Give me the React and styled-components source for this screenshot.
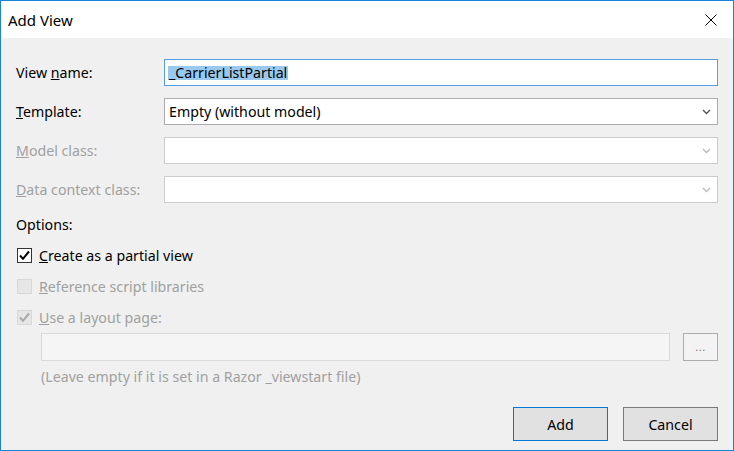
import React from "react";
import styled, { createGlobalStyle, css } from "styled-components";

const GlobalStyle = createGlobalStyle`
  html, body {
    margin: 0;
    padding: 0;
    background: #ffffff;
  }
  body {
    font-family: "Noto Sans", "Open Sans", sans-serif;
    font-size: 14px;
  }
`;

const Window = styled.div`
  width: 734px;
  height: 451px;
  box-sizing: border-box;
  border: 1px solid #1883d7;
  display: flex;
  flex-direction: column;
  background: #f0f0f0;
  color: #000;
`;

const TitleBar = styled.div`
  height: 37px;
  background: #ffffff;
  display: flex;
  align-items: center;
  justify-content: space-between;
  padding: 0 10px 0 7px;
  font-size: 15px;
`;

const CloseButton = styled.button`
  border: none;
  background: none;
  padding: 0;
  width: 24px;
  height: 24px;
  display: flex;
  align-items: center;
  justify-content: center;
`;

const Body = styled.div`
  flex: 1;
  display: flex;
  flex-direction: column;
  padding: 21px 15px 0 15px;
  font-size: 14.2px;
`;

const FieldGrid = styled.div`
  display: grid;
  grid-template-columns: 148px 1fr;
  row-gap: 12px;
  align-items: center;
`;

const Label = styled.label`
  color: ${({ disabled }) => (disabled ? "#a0a0a0" : "#000")};
`;

const TextBox = styled.div`
  height: 27px;
  box-sizing: border-box;
  background: #fff;
  border: 1px solid #569de5;
  display: flex;
  align-items: center;
  padding-left: 3px;
`;

const Selected = styled.span`
  background: #99c9ef;
  line-height: 14px;
  padding: 0 1px;
`;

const Select = styled.div`
  height: 27px;
  box-sizing: border-box;
  background: #fff;
  border: 1px solid ${({ disabled }) => (disabled ? "#cccccc" : "#acacac")};
  display: flex;
  align-items: center;
  justify-content: space-between;
  padding: 0 6px 0 4px;
`;

const OptionsTitle = styled.div`
  margin-top: 12px;
`;

const CheckRow = styled.div`
  display: flex;
  align-items: center;
  gap: 7px;
  height: 20px;
  margin-top: 11px;
  padding-left: 1px;
  color: ${({ disabled }) => (disabled ? "#a0a0a0" : "#000")};
`;

const Box = styled.span`
  width: 15px;
  height: 15px;
  box-sizing: border-box;
  display: flex;
  align-items: center;
  justify-content: center;
  ${({ disabled }) =>
    disabled
      ? css`
          border: 1px solid #d8d8d8;
          background: #e6e6e6;
        `
      : css`
          border: 1px solid #333;
          background: #fff;
        `}
`;

const LayoutRow = styled.div`
  display: flex;
  gap: 13px;
  margin-top: 6px;
  padding-left: 25px;
`;

const LayoutInput = styled.div`
  flex: 1;
  height: 28px;
  box-sizing: border-box;
  background: #f5f5f5;
  border: 1px solid #dadada;
`;

const Browse = styled.button`
  width: 35px;
  height: 28px;
  box-sizing: border-box;
  border: 1px solid #adadad;
  background: #f3f3f3;
  color: #777;
  font-family: inherit;
  font-size: 11px;
  padding: 0;
  line-height: 20px;
  letter-spacing: 0.5px;
`;

const Hint = styled.div`
  padding-left: 25px;
  margin-top: 6px;
  color: #a0a0a0;
`;

const Footer = styled.div`
  display: flex;
  justify-content: flex-end;
  gap: 15px;
  margin-top: auto;
  margin-bottom: 9px;
`;

const Button = styled.button`
  width: 95px;
  height: 34px;
  box-sizing: border-box;
  background: #e1e1e1;
  border: 1px solid ${({ primary }) => (primary ? "#0078d7" : "#7a7a7a")};
  font-family: inherit;
  font-size: 14.2px;
  color: #000;
  padding: 0;
`;

const Chevron = ({ color }) => (
  <svg width="9" height="6" viewBox="0 0 9 6">
    <path d="M1 1 L4.5 4.5 L8 1" fill="none" stroke={color} strokeWidth="1.4" />
  </svg>
);

const Check = ({ color }) => (
  <svg width="13" height="13" viewBox="0 0 13 13">
    <path d="M2 6.5 L5 9.8 L11 2.5" fill="none" stroke={color} strokeWidth="2" />
  </svg>
);

const Option = ({ disabled, checked, accel, rest }) => (
  <CheckRow disabled={disabled}>
    <Box disabled={disabled}>
      {checked && <Check color={disabled ? "#a8a8a8" : "#000"} />}
    </Box>
    <span>
      <u>{accel}</u>
      {rest}
    </span>
  </CheckRow>
);

export default function App() {
  return (
    <>
      <GlobalStyle />
      <Window>
        <TitleBar>
          <span>Add View</span>
          <CloseButton>
            <svg width="12" height="12" viewBox="0 0 12 12">
              <path d="M0.5 0.5 L11.5 11.5 M11.5 0.5 L0.5 11.5" stroke="#000" strokeWidth="1" />
            </svg>
          </CloseButton>
        </TitleBar>
        <Body>
          <FieldGrid>
            <Label>
              View <u>n</u>ame:
            </Label>
            <TextBox>
              <Selected>_CarrierListPartial</Selected>
            </TextBox>

            <Label>
              <u>T</u>emplate:
            </Label>
            <Select>
              <span>Empty (without model)</span>
              <Chevron color="#555" />
            </Select>

            <Label disabled>
              <u>M</u>odel class:
            </Label>
            <Select disabled>
              <span />
              <Chevron color="#bbb" />
            </Select>

            <Label disabled>
              <u>D</u>ata context class:
            </Label>
            <Select disabled>
              <span />
              <Chevron color="#bbb" />
            </Select>
          </FieldGrid>

          <OptionsTitle>Options:</OptionsTitle>
          <Option checked accel="C" rest="reate as a partial view" />
          <Option disabled accel="R" rest="eference script libraries" />
          <Option disabled checked accel="U" rest="se a layout page:" />

          <LayoutRow>
            <LayoutInput />
            <Browse>...</Browse>
          </LayoutRow>
          <Hint>(Leave empty if it is set in a Razor _viewstart file)</Hint>

          <Footer>
            <Button primary>Add</Button>
            <Button>Cancel</Button>
          </Footer>
        </Body>
      </Window>
    </>
  );
}
